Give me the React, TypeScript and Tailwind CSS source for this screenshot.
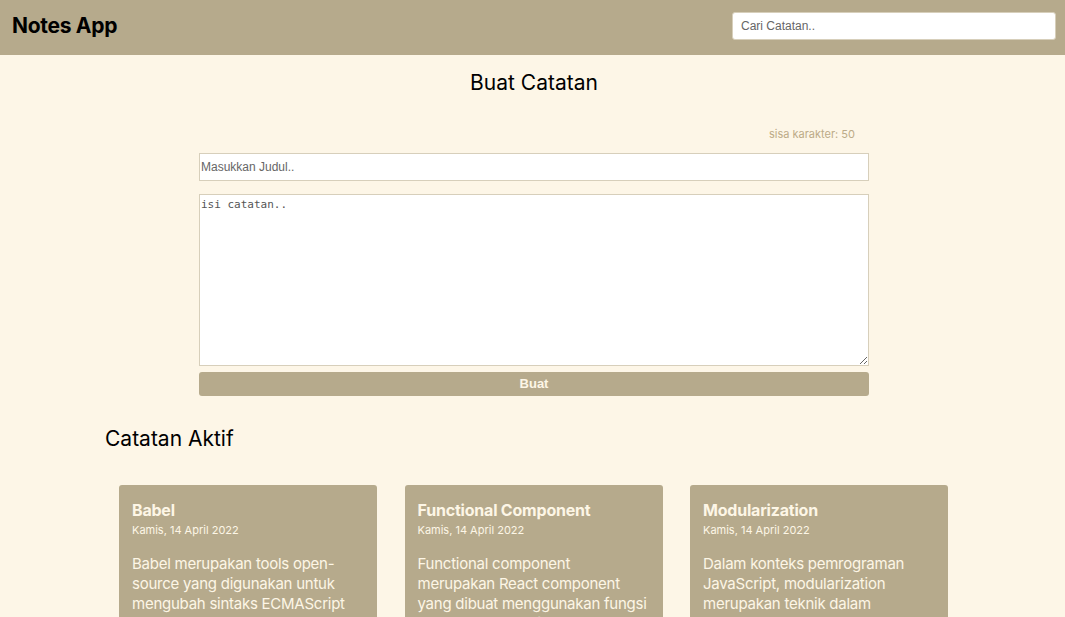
import React from "react";

const notes = [
  {
    title: "Babel",
    date: "Kamis, 14 April 2022",
    body: "Babel merupakan tools open-source yang digunakan untuk mengubah sintaks ECMAScript 2015+ menjadi sintaks yang didukung oleh JavaScript engine versi lama.",
  },
  {
    title: "Functional Component",
    date: "Kamis, 14 April 2022",
    body: "Functional component merupakan React component yang dibuat menggunakan fungsi JavaScript. Agar fungsi JavaScript dapat disebut component.",
  },
  {
    title: "Modularization",
    date: "Kamis, 14 April 2022",
    body: "Dalam konteks pemrograman JavaScript, modularization merupakan teknik dalam memecah atau menggunakan kode dalam berkas JavaScript secara terpisah.",
  },
];

const NoteCard = ({ title, date, body }: { title: string; date: string; body: string }) => (
  <div className="w-[258px] shrink-0 rounded-[3px] bg-[#b6aa8c] px-[13px] pt-[14px] pb-4 text-[#fdf6e6]">
    <h3 className="text-[16px] font-bold leading-[22px] tracking-[-0.2px]">{title}</h3>
    <p className="mt-[2px] text-[11px] leading-[15px]">{date}</p>
    <p className="mt-[16px] text-[15px] leading-[20px] tracking-[-0.25px]">{body}</p>
  </div>
);

export default function App() {
  return (
    <div className="min-h-screen bg-[#fdf6e7] font-['Inter',sans-serif] text-black">
      <header className="flex h-[55px] items-center justify-between bg-[#b6aa8c] pb-[4px] pl-3 pr-[9px]">
        <h1 className="text-[21px] font-bold tracking-[-0.3px]">Notes App</h1>
        <input
          placeholder="Cari Catatan.."
          className="h-[28px] w-[324px] rounded-[3px] border border-[#d7cfbb] bg-white px-2 font-['Liberation_Sans',sans-serif] text-[12px] placeholder:text-[#666] outline-none"
        />
      </header>

      <main>
        <section className="ml-[199px] w-[670px] pt-[14px]">
          <h2 className="text-center text-[21px] leading-[28px]">Buat Catatan</h2>
          <p className="mt-[29px] pr-[14px] text-right text-[11px] leading-[16px] text-[#bcab88]">sisa karakter: 50</p>
          <form className="mt-[11px] flex flex-col">
            <input
              placeholder="Masukkan Judul.."
              className="h-[28px] border border-[#d7cfbb] bg-white px-[1px] font-['Liberation_Sans',sans-serif] text-[12px] placeholder:text-[#666] outline-none"
            />
            <textarea
              placeholder="isi catatan.."
              className="mt-[13px] h-[172px] border border-[#d7cfbb] bg-white px-[1px] py-[2px] font-['DejaVu_Sans_Mono',monospace] text-[11px] placeholder:text-[#555] outline-none"
            />
            <button
              type="button"
              className="mt-[6px] h-[24px] rounded-[3px] bg-[#b6aa8c] font-['Liberation_Sans',sans-serif] text-[13px] font-bold text-[#fdf6e6]"
            >
              Buat
            </button>
          </form>
        </section>

        <section className="px-[105px] pt-[29px]">
          <h2 className="text-[21px] leading-[28px]">Catatan Aktif</h2>
          <div className="mt-[32px] flex gap-[27.5px] pl-[14px]">
            {notes.map((n) => (
              <NoteCard key={n.title} {...n} />
            ))}
          </div>
        </section>
      </main>
    </div>
  );
}
